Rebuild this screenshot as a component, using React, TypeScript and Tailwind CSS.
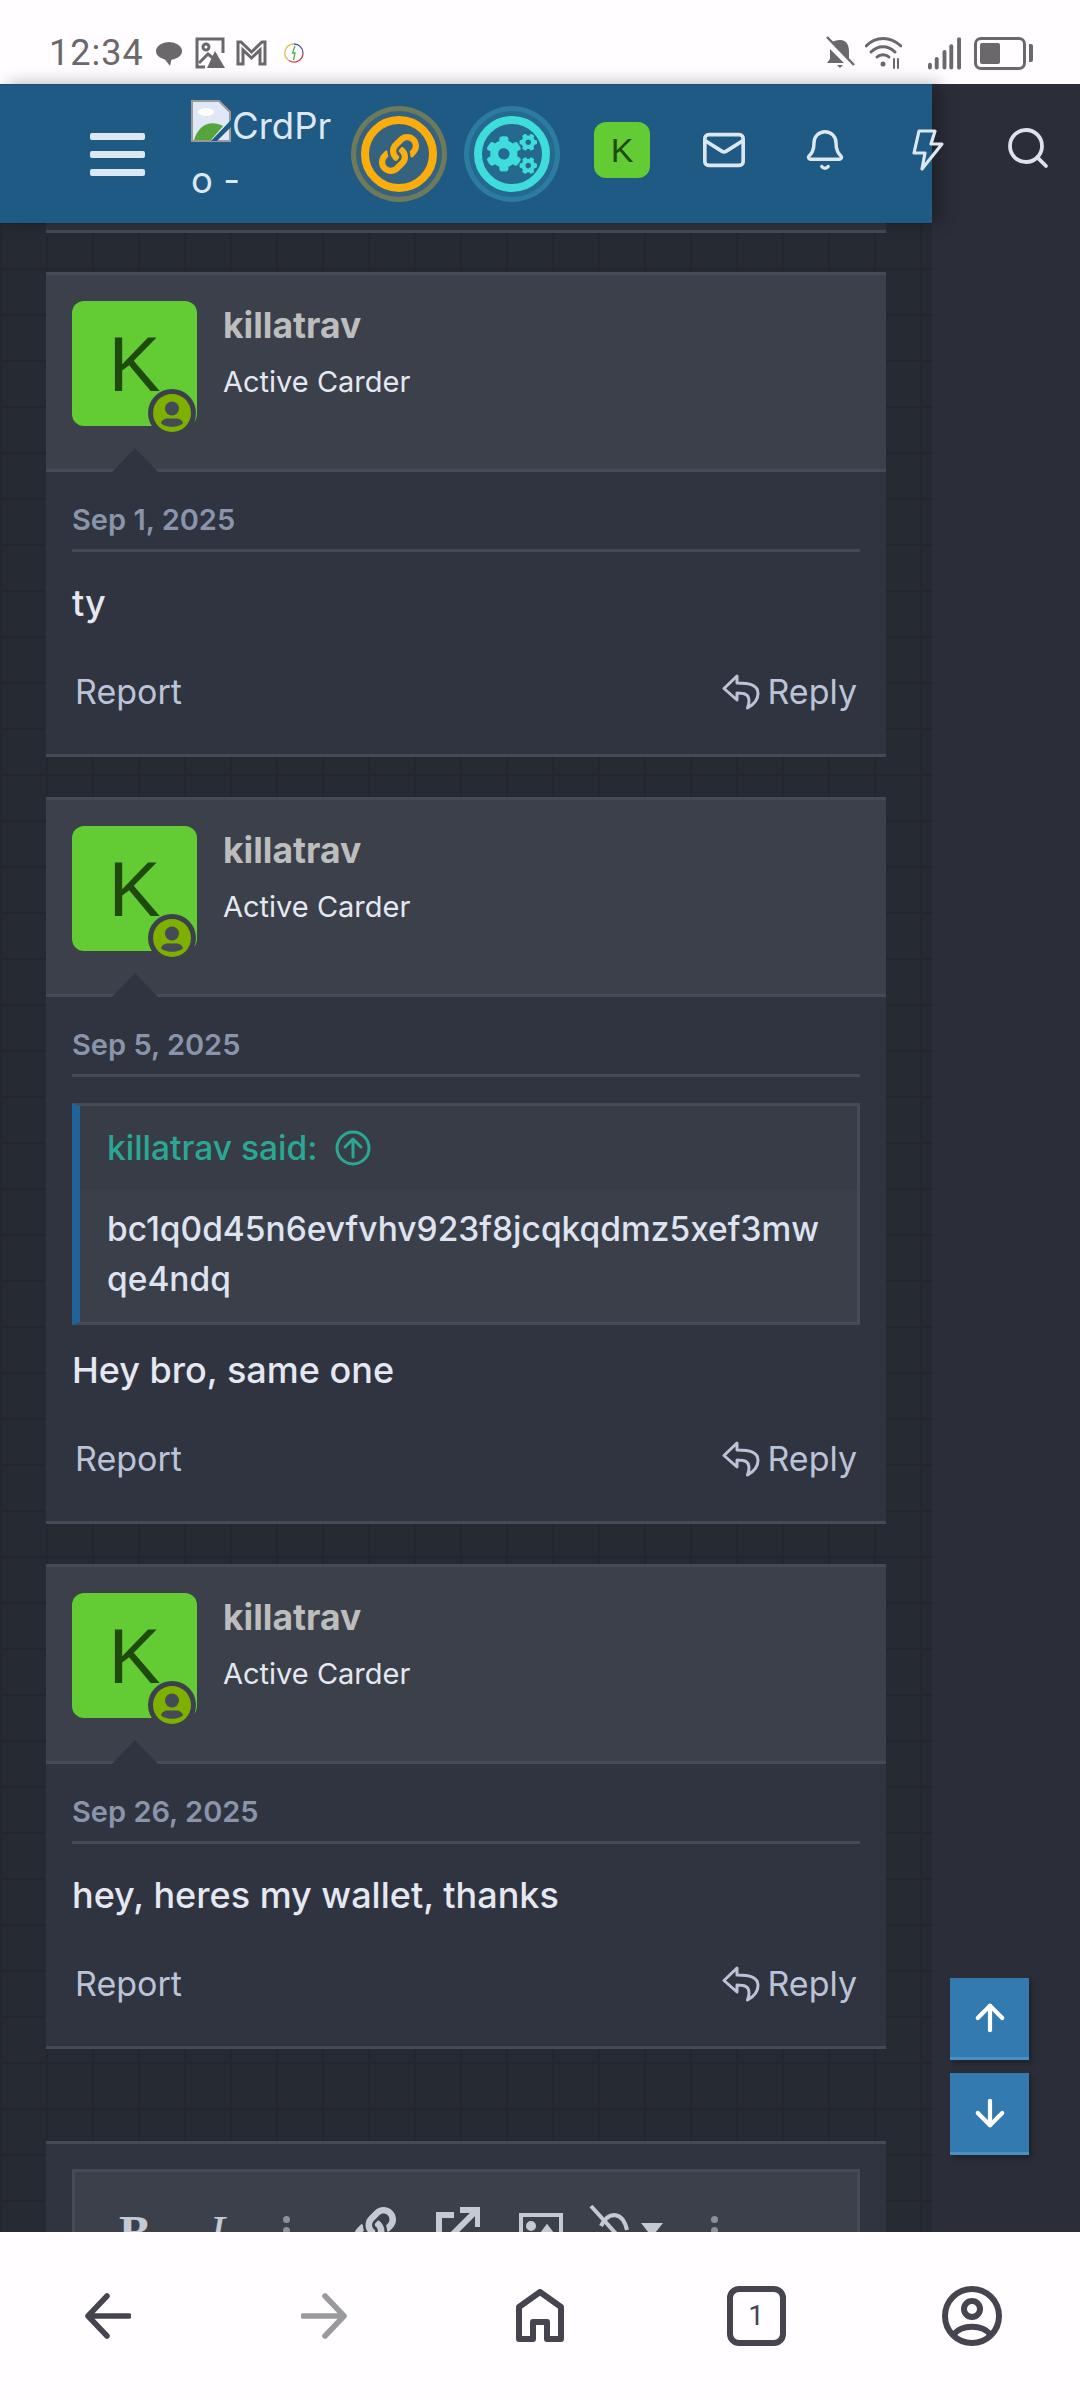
import React from "react";
import { Mail, Bell, Search, ArrowUp, ArrowDown } from "lucide-react";
import { FaLink, FaCogs } from "react-icons/fa";

const sans = "font-['Inter','Noto_Sans',sans-serif]";

function ReplyIcon() {
  return (
    <svg width="38" height="36" viewBox="0 0 38 36" fill="none" stroke="#bcc3d8" strokeWidth="3" strokeLinejoin="round" strokeLinecap="round">
      <path d="M15 2 L2 14.5 L15 26 V19 C22 19 27 20 27 27 C27 29 26.5 31.5 25.5 34 C31 31 36 26 36 19.5 C36 11 28 9 15 9 Z" />
    </svg>
  );
}

function Avatar() {
  return (
    <div className="relative w-[125px] h-[125px] rounded-[12px] bg-[#63cb33] flex items-center justify-center shrink-0">
      <span className="font-['Liberation_Sans',sans-serif] text-[78px] leading-none text-[#1f4a0c]">K</span>
      <span className="absolute left-[76px] top-[88px] w-[48px] h-[48px] rounded-full bg-[#3b404b] flex items-center justify-center">
        <svg width="38" height="38" viewBox="0 0 38 38">
          <circle cx="19" cy="19" r="19" fill="#7eb000" />
          <circle cx="19" cy="14.5" r="7" fill="#454a57" />
          <path d="M8 29 C10 24 14 24.5 19 24.5 C24 24.5 28 24 30 29 C26 34 12 34 8 29 Z" fill="#454a57" />
        </svg>
      </span>
    </div>
  );
}

function Post({ date, children }: { date: string; children: React.ReactNode }) {
  return (
    <article className="bg-[#2f3440] border-b-[3px] border-[#454a57] mb-[40px]">
      <header className="relative h-[200px] bg-[#3b404b] border-t-[3px] border-b-[3px] border-[#454a57] pl-[26px] pt-[26px] flex gap-[26px]">
        <Avatar />
        <div>
          <div className="text-[35.5px] leading-[44px] mt-[3px] font-bold text-[#bdbdbd]">killatrav</div>
          <div className="text-[29px] leading-[40px] mt-[14px] text-[#e5e8f0]">Active Carder</div>
        </div>
        <span className="absolute left-[66px] bottom-[-3px] w-0 h-0 border-l-[23px] border-r-[23px] border-b-[24px] border-l-transparent border-r-transparent border-b-[#2f3440]" />
      </header>
      <div className="px-[26px]">
        <div className="pt-[30px] pb-[11px] text-[29px] leading-[36px] font-semibold text-[#8a94aa] border-b-[3px] border-[#454a57]">{date}</div>
        {children}
        <div className="flex justify-between items-center pt-[46px] pb-[42px] px-[3px] text-[34px] leading-[40px] text-[#bcc3d8]">
          <span>Report</span>
          <span className="flex items-center gap-[7px]"><ReplyIcon />Reply</span>
        </div>
      </div>
    </article>
  );
}

function Message({ text }: { text: string }) {
  return <p className="pt-[28px] text-[36px] leading-[46px] font-medium text-[#e5e8f0]">{text}</p>;
}

function Ring({ outer, inner, bg, children }: { outer: string; inner: string; bg: string; children: React.ReactNode }) {
  return (
    <div className={`w-[96px] h-[96px] rounded-full flex items-center justify-center ${outer}`}>
      <div className={`w-[86px] h-[86px] rounded-full flex items-center justify-center ${bg}`}>
        <div className={`w-[76px] h-[76px] rounded-full border-[8px] flex items-center justify-center ${inner}`}>{children}</div>
      </div>
    </div>
  );
}

function StatusBar() {
  return (
    <div className="h-[84px] shrink-0 bg-[#fffdff] flex items-start justify-between pl-[49px] pr-[47px] pt-[36px] text-[#6a686a]">
      <div className="flex items-center">
        <span className="font-['Roboto',sans-serif] text-[36px] leading-[34px] tracking-[1px]">12:34</span>
        <svg className="ml-[11px]" width="28" height="28" viewBox="0 0 28 28" fill="#6a686a"><ellipse cx="14" cy="12" rx="13" ry="9" /><path d="M8 18 L15 27 L17 18 Z" /></svg>
        <svg className="ml-[12px]" width="30" height="32" viewBox="0 0 30 32" fill="none" stroke="#6a686a" strokeWidth="3"><path d="M10 30 H2 V2 H28 V16" /><circle cx="11" cy="10" r="3" /><path d="M4 26 L13 17 L18 21" /><path d="M20 14 L30 31 H12 Z" fill="#6a686a" stroke="none" /></svg>
        <svg className="ml-[11px]" width="31" height="26" viewBox="0 0 31 26" fill="none" stroke="#6a686a" strokeWidth="3"><path d="M2 24 V2 H5 L15.5 12 L26 2 H29 V24 H24 V10 L15.5 18 L7 10 V24 Z" /></svg>
        <svg className="ml-[17px]" width="20" height="20" viewBox="0 0 20 20" fill="none" strokeWidth="1.3"><path d="M10 1 A9 9 0 0 1 19 10" stroke="#4a4ab0" /><path d="M19 10 A9 9 0 0 1 5 17.5" stroke="#d04040" /><path d="M5 17.5 A9 9 0 0 1 10 1" stroke="#e0c040" /><path d="M11 3 L8.5 10 H11 L9.5 17" stroke="#4caf50" /></svg>
      </div>
      <div className="flex items-center">
        <svg width="29" height="34" viewBox="0 0 29 34" fill="#6a686a"><path d="M14 4 C21 4 23 10 23 16 V23 L6 6 C8 5 10 4 14 4 Z" /><path d="M4 13 L18 27 H1 L4 23 Z" /><path d="M11 29 H17 L14 32 Z" /><path d="M1 1 L28 29" stroke="#6a686a" strokeWidth="2.5" /></svg>
        <svg className="ml-[10px]" width="37" height="32" viewBox="0 0 37 32" fill="none" stroke="#6a686a" strokeWidth="3" strokeLinecap="round"><path d="M1 9 C11 -1 25 -1 36 9" /><path d="M6 15 C13 8 23 8 30 15" /><path d="M12 20 C15 17 21 17 24 20" /><circle cx="18" cy="27" r="2.5" fill="#6a686a" stroke="none" /><path d="M29 22 V31 M33 22 V31" strokeWidth="2" /></svg>
        <svg className="ml-[26px]" width="33" height="33" viewBox="0 0 34 33" fill="#6a686a"><rect x="0" y="26" width="4" height="7" rx="2" /><rect x="7" y="20" width="4" height="13" rx="2" /><rect x="15" y="13" width="4" height="20" rx="2" /><rect x="22" y="7" width="4" height="26" rx="2" /><rect x="30" y="0" width="4" height="33" rx="1.5" /></svg>
        <div className="flex items-center gap-[3px] ml-[13px]">
          <div className="w-[52px] h-[33px] rounded-[7px] border-[3px] border-[#6a686a] p-[3px]"><div className="w-[20px] h-full rounded-[2px] bg-[#6a686a]" /></div>
          <div className="w-[4px] h-[18px] rounded-r-[2px] bg-[#6a686a]" />
        </div>
      </div>
    </div>
  );
}

function TopBar() {
  return (
    <div className="relative z-10 w-[932px] h-[139px] shrink-0 bg-[#1e5a83] border-t border-[#1a4f74] shadow-[8px_0_16px_rgba(0,0,0,0.3)] flex items-center text-[#dde7f2]">
      <div className="ml-[90px] w-[55px] shrink-0 flex flex-col gap-[11px]">
        <span className="h-[7px] rounded-[2px] bg-[#dde7f2]" />
        <span className="h-[7px] rounded-[2px] bg-[#dde7f2]" />
        <span className="h-[7px] rounded-[2px] bg-[#dde7f2]" />
      </div>
      <div className="ml-[46px] w-[146px] shrink-0 font-['Inter','Roboto',sans-serif] text-[36.5px] leading-[54px] whitespace-nowrap -mt-[3px]">
        <div>
          <svg className="inline-block align-[-3px] mr-[1px]" width="40" height="42" viewBox="0 0 40 42">
            <path d="M1 1 H28 L39 12 V41 H1 Z" fill="#dfe8f4" stroke="#9a9a9a" strokeWidth="2" />
            <path d="M3 40 C8 24 20 20 32 26 L20 40 Z" fill="#55a53a" />
            <path d="M40 20 L20 41 H26 L40 27 Z" fill="#1e5a83" />
            <ellipse cx="15" cy="12" rx="8" ry="4" fill="#fff" />
          </svg>
          CrdPr
        </div>
        <div>o -</div>
      </div>
      <div className="ml-[14px] shrink-0">
        <Ring outer="bg-[#6f7a5b]" bg="bg-[#35627f]" inner="border-[#fbae0b] text-[#fbae0b]"><FaLink size={40} /></Ring>
      </div>
      <div className="ml-[17px] shrink-0">
        <Ring outer="bg-[#2c7ba0]" bg="bg-[#25698f]" inner="border-[#3fdcdc] text-[#3fdcdc]"><FaCogs size={50} /></Ring>
      </div>
      <div className="ml-[34px] w-[56px] h-[56px] shrink-0 rounded-[12px] bg-[#63cb33] flex items-center justify-center font-['Liberation_Sans',sans-serif] text-[34px] text-[#1f4a0c] -mt-[8px]">K</div>
      <Mail className="ml-[51px] -mt-[8px] shrink-0" size={46} strokeWidth={1.9} />
      <Bell className="ml-[56px] -mt-[8px] shrink-0" size={44} strokeWidth={1.9} />
      <svg className="ml-[65px] -mt-[8px] shrink-0" width="32" height="42" viewBox="0 0 32 42" fill="none" stroke="#dde7f2" strokeWidth="3.2" strokeLinejoin="round"><path d="M7 2 H23 L19 15 H30 L10 40 L13 24 H2 Z" /></svg>
    </div>
  );
}

function EditorIconRow() {
  return (
    <div className="text-[#c4c9d3] relative h-[62px]">
      <span className="absolute left-[44px] top-[34px] font-['Liberation_Serif',serif] font-bold text-[48px] leading-[54px]">B</span>
      <span className="absolute left-[134px] top-[34px] font-['Liberation_Serif',serif] italic text-[48px] leading-[54px]">I</span>
      <span className="absolute left-[208px] top-[44px] w-[7px] h-[7px] rounded-full bg-[#8b909b]" />
      <span className="absolute left-[208px] top-[55px] w-[7px] h-[7px] rounded-full bg-[#8b909b]" />
      <FaLink className="absolute left-[279px] top-[35px]" size={42} />
      <svg className="absolute left-[361px] top-[35px]" width="44" height="44" viewBox="0 0 44 44" fill="none" stroke="#c4c9d3" strokeWidth="6"><path d="M18 8 H3 V44 M14 30 L40 4 M24 3 H42 V20" /></svg>
      <svg className="absolute left-[444px] top-[41px]" width="44" height="40" viewBox="0 0 44 40" fill="none" stroke="#c4c9d3" strokeWidth="4"><rect x="2" y="2" width="40" height="40" /><circle cx="12" cy="13" r="3" fill="#c4c9d3" /><path d="M16 30 L28 14 L40 30 Z" fill="#c4c9d3" /></svg>
      <svg className="absolute left-[514px] top-[32px]" width="52" height="44" viewBox="0 0 52 44" fill="none" stroke="#c4c9d3" strokeWidth="4"><path d="M2 2 L40 44" /><path d="M12 22 C20 6 34 8 38 26" /></svg>
      <svg className="absolute left-[566px] top-[51px]" width="22" height="14" viewBox="0 0 22 14" fill="#c4c9d3"><path d="M0 0 H22 L11 14 Z" /></svg>
      <span className="absolute left-[636px] top-[44px] w-[7px] h-[7px] rounded-full bg-[#8b909b]" />
      <span className="absolute left-[636px] top-[55px] w-[7px] h-[7px] rounded-full bg-[#8b909b]" />
    </div>
  );
}

function BottomNav() {
  return (
    <nav className="h-[168px] shrink-0 bg-[#fffdff] relative z-20 grid grid-cols-5 items-center justify-items-center">
      <svg width="46" height="46" viewBox="0 0 46 46" fill="none" stroke="#45444f" strokeWidth="5.5" strokeLinecap="round" strokeLinejoin="round"><path d="M44 23 H3 M22 3 L3 23 L22 43" /></svg>
      <svg width="46" height="46" viewBox="0 0 46 46" fill="none" stroke="#9a9a9e" strokeWidth="5.5" strokeLinecap="round" strokeLinejoin="round"><path d="M2 23 H43 M24 3 L43 23 L24 43" /></svg>
      <svg width="48" height="54" viewBox="0 0 48 54" fill="none" stroke="#45444f" strokeWidth="6" strokeLinejoin="round"><path d="M24 3 L3 18 V50 H17 V33 H31 V50 H45 V18 Z" /></svg>
      <div className="w-[59px] h-[60px] rounded-[12px] border-[6px] border-[#45444f] flex items-center justify-center font-['Roboto',sans-serif] text-[28px] text-[#45444f]">1</div>
      <svg width="60" height="60" viewBox="0 0 60 60" fill="none" stroke="#45444f" strokeWidth="6"><circle cx="30" cy="30" r="27" /><circle cx="30" cy="23" r="8" /><path d="M12 49 C18 38 42 38 48 49" /></svg>
    </nav>
  );
}

export default function App() {
  return (
    <div className={`${sans} w-[1080px] h-[2400px] flex flex-col overflow-hidden relative bg-[#2b2e38]`}>
      <StatusBar />
      <div className="flex-1 min-h-0 flex relative">
        <div className="w-[932px] flex flex-col min-h-0 bg-[#262a33] bg-[linear-gradient(#23262f_2px,transparent_2px),linear-gradient(90deg,#23262f_2px,transparent_2px)] bg-[size:46px_46px]">
          <TopBar />
          <main className="flex-1 min-h-0 overflow-hidden px-[46px]">
            <div className="h-[10px] bg-[#2f3440] border-b-[3px] border-[#454a57] mb-[39px]" />
            <Post date="Sep 1, 2025"><Message text="ty" /></Post>
            <Post date="Sep 5, 2025">
              <blockquote className="mt-[26px] bg-[#3a3f4a] border-[3px] border-l-[8px] border-[#454a57] border-l-[#20639b]">
                <div className="h-[84px] bg-[#383c47] pl-[27px] flex items-center gap-[18px] text-[33.5px] font-medium text-[#2aa893]">
                  killatrav said:
                  <svg width="36" height="36" viewBox="0 0 36 36" fill="none" stroke="#2aa893" strokeWidth="3" strokeLinecap="round" strokeLinejoin="round"><circle cx="18" cy="18" r="16" /><path d="M18 27 V10 M10 17 L18 9 L26 17" /></svg>
                </div>
                <div className="pl-[27px] pt-[14px] pb-[18px] text-[33.5px] leading-[50px] font-medium text-[#dfe3ef] whitespace-nowrap">
                  <div>bc1q0d45n6evfvhv923f8jcqkqdmz5xef3mw</div>
                  <div>qe4ndq</div>
                </div>
              </blockquote>
              <p className="pt-[22px] text-[36px] leading-[46px] font-medium text-[#e5e8f0]">Hey bro, same one</p>
            </Post>
            <Post date="Sep 26, 2025"><Message text="hey, heres my wallet, thanks" /></Post>
            <div className="mt-[92px] bg-[#2f3440] border-t-[3px] border-[#454a57] px-[26px] pt-[25px] h-[200px]">
              <div className="bg-[#3b404b] border-[3px] border-[#454a57] h-[200px]"><EditorIconRow /></div>
            </div>
          </main>
        </div>
        <aside className="flex-1 pt-[40px] pl-[72px]">
          <Search size={48} strokeWidth={1.9} className="text-[#dde2ec]" />
        </aside>
        <div className="absolute left-[950px] top-[1894px] flex flex-col gap-[13px]">
          <button className="w-[79px] h-[82px] bg-[#337ab0] border-b-[3px] border-[#4a8fc4] shadow-[3px_3px_6px_rgba(0,0,0,0.3)] flex items-center justify-center text-white"><ArrowUp size={42} strokeWidth={2.4} /></button>
          <button className="w-[79px] h-[82px] bg-[#337ab0] border-b-[3px] border-[#4a8fc4] shadow-[3px_3px_6px_rgba(0,0,0,0.3)] flex items-center justify-center text-white"><ArrowDown size={42} strokeWidth={2.4} /></button>
        </div>
      </div>
      <BottomNav />
    </div>
  );
}
